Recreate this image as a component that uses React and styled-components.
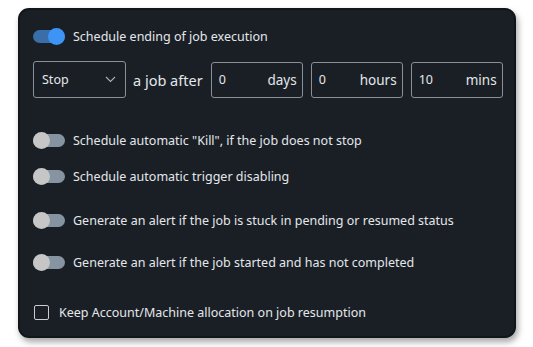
import React, { useState } from 'react';
import styled, { createGlobalStyle, css } from 'styled-components';

const GlobalStyle = createGlobalStyle`
  html, body {
    margin: 0;
    padding: 0;
    background: #ffffff;
  }
  body {
    font-family: "Noto Sans", "Open Sans", sans-serif;
  }
`;

const Page = styled.div`
  width: 533px;
  height: 347px;
  padding: 8px 0 0 18px;
  box-sizing: border-box;
`;

const Card = styled.div`
  width: 498px;
  height: 330px;
  box-sizing: border-box;
  background: #1a1f26;
  border: 2px solid #12161b;
  border-radius: 11px;
  box-shadow: 2px 4px 6px rgba(0, 0, 0, 0.35);
  padding: 15px 11px 0 13px;
  color: #e4e7ea;
  display: flex;
  flex-direction: column;
`;

const Row = styled.label`
  display: flex;
  align-items: center;
  gap: 8px;
  height: 22px;
  font-size: 12.5px;
  white-space: nowrap;
  margin-top: ${({ mt }) => mt || 0}px;
  cursor: pointer;
`;

const Track = styled.span`
  position: relative;
  display: inline-block;
  width: 32px;
  height: 13px;
  border-radius: 7px;
  flex-shrink: 0;
  background: ${({ on }) => (on ? '#3a6ea8' : '#8594a0')};
`;

const Thumb = styled.span`
  position: absolute;
  top: -2px;
  width: 17px;
  height: 17px;
  border-radius: 50%;
  background: #c6c6c6;
  ${({ on }) => on ? css`
    left: 15px;
    background: #3d94f4;
  ` : css`
    left: 0;
  `}
`;

const Toggle = ({ on, onClick }) => (
  <Track on={on} onClick={onClick}>
    <Thumb on={on} />
  </Track>
);

const TimeRow = styled.div`
  display: flex;
  align-items: center;
  gap: 8px;
  margin-top: 14px;
`;

const Select = styled.div`
  width: 93px;
  height: 37px;
  flex-shrink: 0;
  box-sizing: border-box;
  border: 1px solid #8a9099;
  border-radius: 3px;
  display: flex;
  align-items: center;
  justify-content: space-between;
  padding: 0 9px 0 8px;
  font-size: 12.5px;
`;

const AfterText = styled.span`
  font-size: 14.5px;
  white-space: nowrap;
  flex-shrink: 0;
  margin-left: -1px;
`;

const NumberBox = styled.div`
  width: 92px;
  height: 36px;
  flex-shrink: 0;
  box-sizing: border-box;
  border: 1px solid #8a9099;
  border-radius: 3px;
  display: flex;
  align-items: center;
  justify-content: space-between;
  padding: 0 5px 0 7px;
  font-size: 12.5px;
`;

const Unit = styled.span`
  font-size: 13.5px;
`;

const Box = styled.span`
  width: 13px;
  height: 13px;
  border: 1.5px solid #c9ccd0;
  border-radius: 2px;
  flex-shrink: 0;
`;

const CheckRow = styled(Row)`
  gap: 10px;
  padding-left: 1px;
`;

const Chevron = () => (
  <svg width="11" height="7" viewBox="0 0 11 7" fill="none">
    <path d="M1 1l4.5 4.5L10 1" stroke="#aab0b7" strokeWidth="1.1" />
  </svg>
);

export default function App() {
  const [flags, setFlags] = useState([true, false, false, false, false]);
  const flip = (i) => setFlags((f) => f.map((v, j) => (j === i ? !v : v)));

  const rows = [
    { text: 'Schedule ending of job execution', mt: 0 },
    { text: 'Schedule automatic "Kill", if the job does not stop', mt: 31 },
    { text: 'Schedule automatic trigger disabling', mt: 14 },
    { text: 'Generate an alert if the job is stuck in pending or resumed status', mt: 22 },
    { text: 'Generate an alert if the job started and has not completed', mt: 20 },
  ];

  return (
    <Page>
      <GlobalStyle />
      <Card>
        <Row onClick={() => flip(0)}>
          <Toggle on={flags[0]} />
          {rows[0].text}
        </Row>
        <TimeRow>
          <Select>
            Stop
            <Chevron />
          </Select>
          <AfterText>a job after</AfterText>
          <NumberBox>0<Unit>days</Unit></NumberBox>
          <NumberBox>0<Unit>hours</Unit></NumberBox>
          <NumberBox>10<Unit>mins</Unit></NumberBox>
        </TimeRow>
        {rows.slice(1).map((r, i) => (
          <Row key={r.text} mt={r.mt} onClick={() => flip(i + 1)}>
            <Toggle on={flags[i + 1]} />
            {r.text}
          </Row>
        ))}
        <CheckRow mt={28}>
          <Box />
          Keep Account/Machine allocation on job resumption
        </CheckRow>
      </Card>
    </Page>
  );
}
